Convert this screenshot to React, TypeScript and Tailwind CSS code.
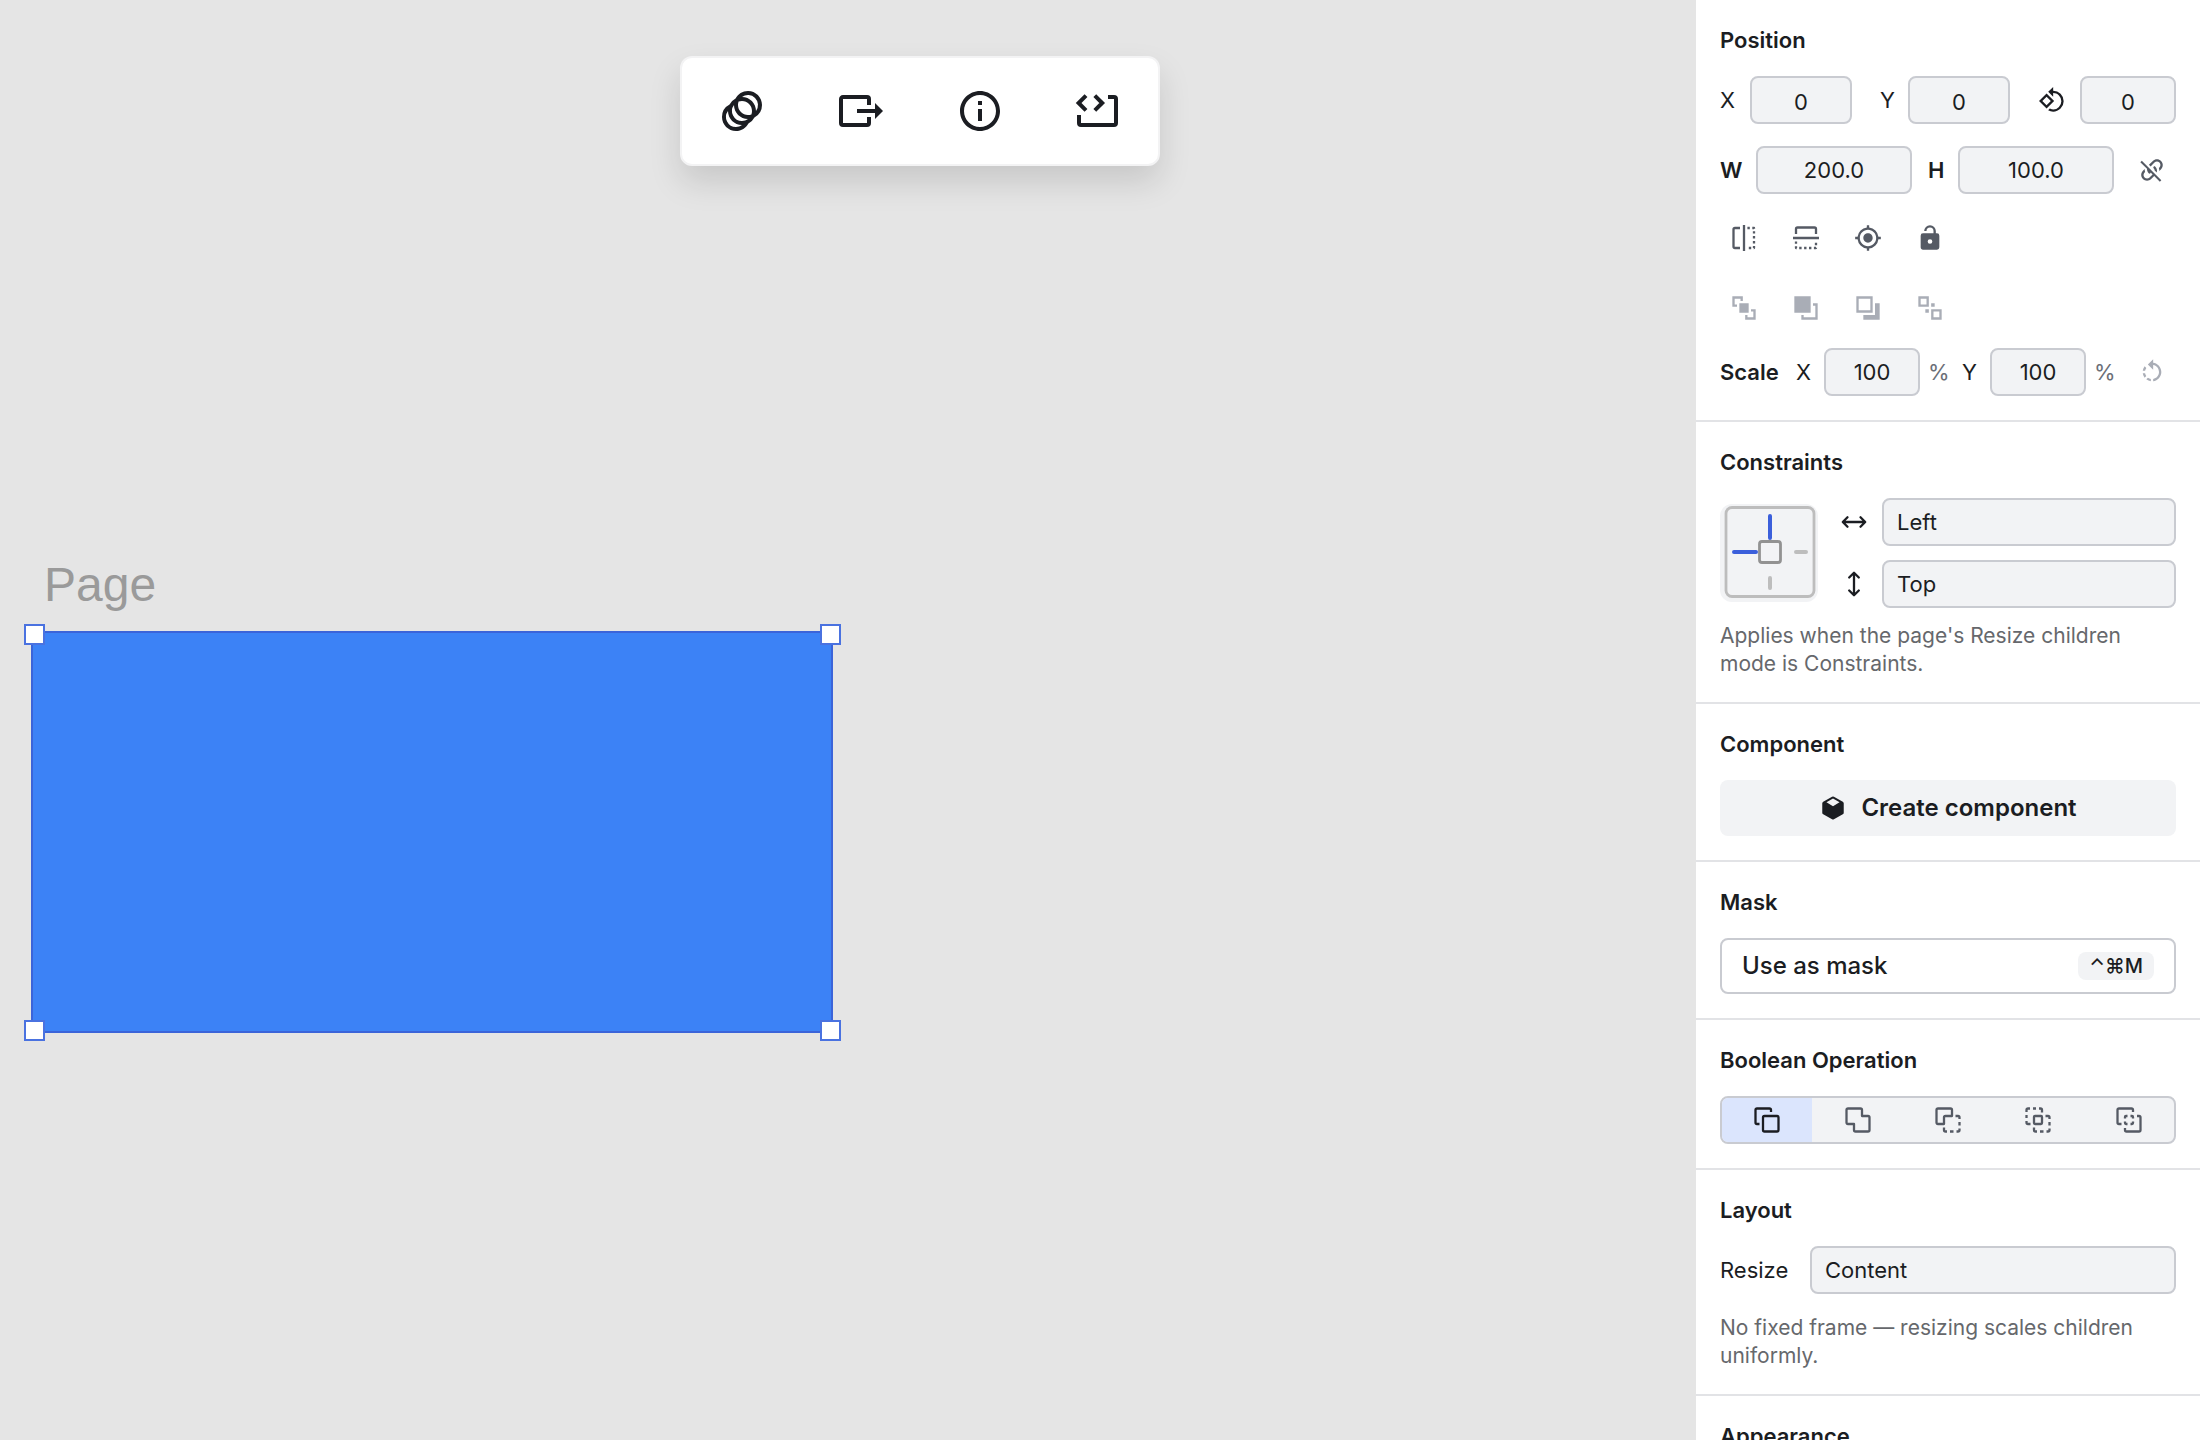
import { useState } from "react"
import type { ReactNode } from "react"
import {
  MdAnimation,
  MdMyLocation,
  MdOutlineInfo,
  MdRotate90DegreesCcw,
  MdRotateLeft,
} from "react-icons/md"

const fieldClass =
  "h-12 min-w-0 rounded-lg border-2 border-[#c9cbd1] bg-[#f2f3f5] text-[22px] text-[#1b1d22]"

const handleClass = "absolute size-[21px] border-2 border-[#4a72e0] bg-white"

// filled 24-unit icon
function Glyph({ d, className = "size-7" }: { d: string; className?: string }) {
  return (
    <svg viewBox="0 0 24 24" className={className} fill="currentColor" aria-hidden="true">
      <path fillRule="evenodd" d={d} />
    </svg>
  )
}

// stroked 28-unit icon
function Lines({ children }: { children: ReactNode }) {
  return (
    <svg
      viewBox="0 0 28 28"
      className="size-7"
      fill="none"
      stroke="currentColor"
      strokeWidth={2.3}
      strokeLinejoin="round"
      aria-hidden="true"
    >
      {children}
    </svg>
  )
}

const paths = {
  export:
    "M23,12L19,8V11H10V13H19V16M1,18V6C1,4.89 1.9,4 3,4H15A2,2 0 0,1 17,6V9H15V6H3V18H15V15H17V18A2,2 0 0,1 15,20H3A2,2 0 0,1 1,18Z",
  linkOff:
    "M2,5.27L3.28,4L20,20.72L18.73,22L13.9,17.17L11.29,19.78C9.34,21.73 6.17,21.73 4.22,19.78C2.27,17.83 2.27,14.66 4.22,12.71L5.71,11.22C5.7,12.04 5.83,12.86 6.11,13.65L5.64,14.12C4.46,15.29 4.46,17.19 5.64,18.36C6.81,19.54 8.71,19.54 9.88,18.36L12.5,15.76L10.88,14.15C10.87,14.39 10.77,14.64 10.59,14.83C10.2,15.22 9.56,15.22 9.17,14.83C8.12,13.77 7.63,12.37 7.72,11L2,5.27M12.71,4.22C14.66,2.27 17.83,2.27 19.78,4.22C21.73,6.17 21.73,9.34 19.78,11.29L18.29,12.78C18.3,11.96 18.17,11.14 17.89,10.36L18.36,9.88C19.54,8.71 19.54,6.81 18.36,5.64C17.19,4.46 15.29,4.46 14.12,5.64L10.79,8.97L9.38,7.55L12.71,4.22M13.41,9.17C13.8,8.78 14.44,8.78 14.83,9.17C16.2,10.54 16.61,12.5 16.06,14.23L14.28,12.46C14.23,11.78 13.94,11.11 13.41,10.59C13,10.2 13,9.56 13.41,9.17Z",
  lockOpen:
    "M18,8A2,2 0 0,1 20,10V20A2,2 0 0,1 18,22H6C4.89,22 4,21.1 4,20V10A2,2 0 0,1 6,8H15V6A3,3 0 0,0 12,3A3,3 0 0,0 9,6H7A5,5 0 0,1 12,1A5,5 0 0,1 17,6V8H18M12,17A2,2 0 0,0 14,15A2,2 0 0,0 12,13A2,2 0 0,0 10,15A2,2 0 0,0 12,17Z",
  toFront:
    "M2,2H11V6H9V4H4V9H6V11H2V2M22,13V22H13V18H15V20H20V15H18V13H22M8,8H16V16H8V8Z",
  forward: "M2,2H16V16H2V2M22,8V22H8V18H10V20H20V10H18V8H22Z",
  backward: "M2,2H16V16H2V2M22,8V22H8V18H18V8H22M4,4V14H14V4H4Z",
  toBack:
    "M2,2H11V11H2V2M9,4H4V9H9V4M22,13V22H13V13H22M15,20H20V15H15V20M16,8V11H13V8H16M11,16H8V13H11V16Z",
  cube: "M11.2,2.4Q12,2 12.8,2.4L20.4,6.6Q21.2,7.1 21.2,8V16Q21.2,16.9 20.4,17.4L12.8,21.7Q12,22.1 11.2,21.7L3.6,17.4Q2.8,16.9 2.8,16V8Q2.8,7.1 3.6,6.6ZM12,3.9L6.4,7.1L12,10.4L17.6,7.1Z",
}

const toolbarItems = [
  { label: "Animation", icon: <MdAnimation className="size-12" /> },
  { label: "Export", icon: <Glyph d={paths.export} className="size-12" /> },
  { label: "Info", icon: <MdOutlineInfo className="size-12" /> },
  {
    label: "Embed code",
    icon: (
      <svg viewBox="0 0 24 24" className="size-12" fill="none" stroke="currentColor" strokeWidth={2} aria-hidden="true">
        <path d="M5.5 4.3 1.8 8l3.7 3.7M9.9 4.3 13.6 8l-3.7 3.7" />
        <path d="M16.5 5H19.5Q20.5 5 20.5 6V18Q20.5 19 19.5 19H3Q2 19 2 18V14" />
      </svg>
    ),
  },
]

const transformItems = [
  {
    label: "Flip horizontal",
    icon: (
      <Lines>
        <path d="M10 4H5Q3.5 4 3.5 5.5V22.5Q3.5 24 5 24H10M14 1V27" />
        <path strokeDasharray="2.4 2.5" d="M17.4 4H24V24H17.4" />
      </Lines>
    ),
  },
  {
    label: "Flip vertical",
    icon: (
      <Lines>
        <path d="M4 10V5Q4 3.5 5.5 3.5H22.5Q24 3.5 24 5V10M1 14H27" />
        <path strokeDasharray="2.4 2.5" d="M4 17.4V24H24V17.4" />
      </Lines>
    ),
  },
  { label: "Center", icon: <MdMyLocation className="size-7" /> },
  { label: "Lock", icon: <Glyph d={paths.lockOpen} /> },
]

const orderItems = [
  { label: "Bring to front", icon: <Glyph d={paths.toFront} /> },
  { label: "Bring forward", icon: <Glyph d={paths.forward} /> },
  { label: "Send backward", icon: <Glyph d={paths.backward} /> },
  { label: "Send to back", icon: <Glyph d={paths.toBack} /> },
]

const booleanItems = [
  {
    label: "None",
    icon: (
      <Lines>
        <rect x="10" y="10" width="15.5" height="15.5" rx="1.5" />
        <path d="M18 6V4Q18 2.5 16.5 2.5H4Q2.5 2.5 2.5 4V16.5Q2.5 18 4 18H6.5" />
      </Lines>
    ),
  },
  {
    label: "Union",
    icon: (
      <Lines>
        <path d="M4 2.5H16.5Q18 2.5 18 4V10H24Q25.5 10 25.5 11.5V24Q25.5 25.5 24 25.5H11.5Q10 25.5 10 24V18H4Q2.5 18 2.5 16.5V4Q2.5 2.5 4 2.5Z" />
      </Lines>
    ),
  },
  {
    label: "Subtract",
    icon: (
      <Lines>
        <path d="M4 2.5H16.5Q18 2.5 18 4V10H11.5Q10 10 10 11.5V18H4Q2.5 18 2.5 16.5V4Q2.5 2.5 4 2.5Z" />
        <path d="M21.5 10H24Q25.5 10 25.5 11.5V13M25.5 16V19.5M25.5 22.5V24Q25.5 25.5 24 25.5H22.5M19.5 25.5H16M13 25.5H11.5Q10 25.5 10 24V21.5" />
      </Lines>
    ),
  },
  {
    label: "Intersect",
    icon: (
      <Lines>
        <rect x="10" y="10" width="8" height="8" rx="1" />
        <path d="M6 2.5H4Q2.5 2.5 2.5 4V6M9 2.5H12M15 2.5H16.5Q18 2.5 18 4V6.5M2.5 9V12M2.5 15V16.5Q2.5 18 4 18H6.5" />
        <path d="M21.5 10H24Q25.5 10 25.5 11.5V13M25.5 16V19.5M25.5 22.5V24Q25.5 25.5 24 25.5H22.5M19.5 25.5H16M13 25.5H11.5Q10 25.5 10 24V21.5" />
      </Lines>
    ),
  },
  {
    label: "Exclude",
    icon: (
      <Lines>
        <path d="M18 6V4Q18 2.5 16.5 2.5H4Q2.5 2.5 2.5 4V16.5Q2.5 18 4 18H6.5M22 10H24Q25.5 10 25.5 11.5V24Q25.5 25.5 24 25.5H11.5Q10 25.5 10 24V22" />
        <path d="M10 12.5V11Q10 10 11 10H12.5M15.5 10H17Q18 10 18 11V12.5M18 15.5V17Q18 18 17 18H15.5M12.5 18H11Q10 18 10 17V15.5" />
      </Lines>
    ),
  },
]

function Section({ title, children }: { title: string; children?: ReactNode }) {
  return (
    <section className="border-b-2 border-[#e2e3e6] px-6 py-6">
      <h2 className="mb-5 text-[22px] leading-8 font-semibold">{title}</h2>
      {children}
    </section>
  )
}

function IconRow({ items, className }: { items: { label: string; icon: ReactNode }[]; className: string }) {
  return (
    <div className={`flex gap-3.5 ${className}`}>
      {items.map((item) => (
        <button key={item.label} type="button" aria-label={item.label} className="flex size-12 items-center justify-center">
          {item.icon}
        </button>
      ))}
    </div>
  )
}

function ConstraintPreview() {
  return (
    <svg viewBox="0 0 98 98" className="size-[98px] rounded-xl bg-[#f2f3f5]" fill="none" aria-hidden="true">
      <rect x="6" y="3.5" width="88" height="89" rx="6" stroke="#bdbdbd" strokeWidth="2.8" />
      <g strokeWidth="4" strokeLinecap="round">
        <path d="M50 12V34M14 48H36" stroke="#3b5fdb" />
        <path d="M76 48H86M50 74V84" stroke="#bdbdbd" />
      </g>
      <rect x="39.5" y="37.5" width="21" height="21" rx="2.5" stroke="#929292" strokeWidth="2.8" fill="#f2f3f5" />
    </svg>
  )
}

function PositionSection() {
  return (
    <Section title="Position">
      <div className="flex items-center gap-7">
        <div className="flex items-center">
          <label htmlFor="pos-x" className="w-[30px]">X</label>
          <input id="pos-x" defaultValue="0" className={`${fieldClass} w-[102px] pt-1 text-center`} />
        </div>
        <div className="flex items-center">
          <label htmlFor="pos-y" className="w-7">Y</label>
          <input id="pos-y" defaultValue="0" className={`${fieldClass} w-[102px] pt-1 text-center`} />
        </div>
        <div className="flex flex-1 items-center gap-3.5">
          <label htmlFor="rotation" aria-label="Rotation">
            <MdRotate90DegreesCcw className="size-7" />
          </label>
          <input id="rotation" defaultValue="0" className={`${fieldClass} w-full pt-1 text-center`} />
        </div>
      </div>

      <div className="mt-[22px] flex items-center">
        <label htmlFor="size-w" className="w-9 font-semibold">W</label>
        <input id="size-w" defaultValue="200.0" className={`${fieldClass} mr-4 flex-1 text-center`} />
        <label htmlFor="size-h" className="w-[30px] font-semibold">H</label>
        <input id="size-h" defaultValue="100.0" className={`${fieldClass} flex-1 text-center`} />
        <button type="button" aria-label="Link proportions" className="ml-3.5 flex size-12 items-center justify-center text-[#555a64]">
          <Glyph d={paths.linkOff} />
        </button>
      </div>

      <IconRow items={transformItems} className="mt-5 text-[#555a64]" />
      <IconRow items={orderItems} className="mt-[22px] text-[#a9adb6]" />

      <div className="mt-4 flex items-center">
        <span className="w-[76px] font-semibold">Scale</span>
        <label htmlFor="scale-x" className="w-7">X</label>
        <input id="scale-x" defaultValue="100" className={`${fieldClass} w-24 text-center`} />
        <span className="ml-2 w-[34px] text-[#6b6f78]">%</span>
        <label htmlFor="scale-y" className="w-7">Y</label>
        <input id="scale-y" defaultValue="100" className={`${fieldClass} w-24 text-center`} />
        <span className="ml-2 w-[34px] text-[#6b6f78]">%</span>
        <button type="button" aria-label="Reset scale" className="flex size-12 items-center justify-center text-[#a9adb6]">
          <MdRotateLeft className="size-7" />
        </button>
      </div>
    </Section>
  )
}

function ConstraintsSection() {
  return (
    <Section title="Constraints">
      <div className="flex items-center justify-between">
        <ConstraintPreview />
        <div className="flex w-[336px] flex-col gap-3.5">
          <div className="flex items-center gap-3.5">
            <label htmlFor="constraint-h" aria-label="Horizontal">
              <Lines>
                <path strokeLinecap="round" d="M3 14H25M7.5 9.2 2.8 14l4.7 4.8M20.5 9.2 25.2 14l-4.7 4.8" />
              </Lines>
            </label>
            <select id="constraint-h" className={`${fieldClass} flex-1 appearance-none pl-[13px]`}>
              <option>Left</option>
              <option>Right</option>
            </select>
          </div>
          <div className="flex items-center gap-3.5">
            <label htmlFor="constraint-v" aria-label="Vertical">
              <Lines>
                <path strokeLinecap="round" d="M14 3V25M9.2 7.5 14 2.8l4.8 4.7M9.2 20.5 14 25.2l4.8-4.7" />
              </Lines>
            </label>
            <select id="constraint-v" className={`${fieldClass} flex-1 appearance-none pl-[13px]`}>
              <option>Top</option>
              <option>Bottom</option>
            </select>
          </div>
        </div>
      </div>
      <p className="mt-3.5 text-[21px] leading-7 text-[#66686c]">
        Applies when the page's Resize children mode is Constraints.
      </p>
    </Section>
  )
}

function Inspector() {
  const [operation, setOperation] = useState("None")

  return (
    <aside className="w-[504px] shrink-0 overflow-hidden bg-white">
      <PositionSection />
      <ConstraintsSection />

      <Section title="Component">
        <button type="button" className="flex h-14 w-full items-center justify-center gap-3.5 rounded-lg bg-[#f2f3f5] text-2xl font-semibold">
          <Glyph d={paths.cube} />
          Create component
        </button>
      </Section>

      <Section title="Mask">
        <button type="button" className="flex h-14 w-full items-center justify-between rounded-lg border-2 border-[#c9cbd1] px-5 text-2xl font-medium">
          Use as mask
          <kbd className="rounded-lg bg-[#f2f3f5] px-[11px] font-[Inter,'DejaVu_Sans',sans-serif] text-xl leading-7">⌃⌘M</kbd>
        </button>
      </Section>

      <Section title="Boolean Operation">
        <div className="flex h-12 overflow-hidden rounded-lg border-2 border-[#c9cbd1] bg-[#f2f3f5]">
          {booleanItems.map((item) => (
            <button
              key={item.label}
              type="button"
              aria-label={item.label}
              aria-pressed={operation === item.label}
              onClick={() => setOperation(item.label)}
              className={`flex flex-1 items-center justify-center ${operation === item.label ? "bg-[#dbe5fd]" : "text-[#555a64]"}`}
            >
              {item.icon}
            </button>
          ))}
        </div>
      </Section>

      <Section title="Layout">
        <div className="flex items-center">
          <label htmlFor="resize" className="w-[90px]">Resize</label>
          <select id="resize" className={`${fieldClass} flex-1 appearance-none pl-[13px]`}>
            <option>Content</option>
            <option>Constraints</option>
          </select>
        </div>
        <p className="mt-5 text-[21px] leading-7 text-[#66686c]">
          No fixed frame — resizing scales children uniformly.
        </p>
      </Section>

      <Section title="Appearance" />
    </aside>
  )
}

function Canvas() {
  return (
    <main className="relative flex-1 overflow-hidden bg-[#e5e5e5]">
      {/* Toolbar */}
      <div className="flex justify-center pt-14 pl-36">
        <div className="flex h-[110px] w-[480px] rounded-xl border-2 border-[#f3f3f4] bg-white shadow-[0_16px_32px_rgba(0,0,0,0.13)]">
          {toolbarItems.map((item) => (
            <button key={item.label} type="button" aria-label={item.label} className="flex flex-1 items-center justify-center">
              {item.icon}
            </button>
          ))}
        </div>
      </div>

      {/* Selected page */}
      <div className="absolute top-[631px] left-[31px] h-[402px] w-[802px] border-2 border-[#3b64d9] bg-[#3c82f6]">
        <span className="absolute -top-[76px] left-[11px] font-['Liberation_Sans',sans-serif] text-5xl leading-[56px] text-[#9a9a9a]">Page</span>
        <span className={`${handleClass} -top-[9px] -left-[9px]`} />
        <span className={`${handleClass} -top-[9px] -right-2.5`} />
        <span className={`${handleClass} -bottom-2.5 -left-[9px]`} />
        <span className={`${handleClass} -right-2.5 -bottom-2.5`} />
      </div>
    </main>
  )
}

export default function App() {
  return (
    <div className="flex h-screen overflow-hidden font-[Inter,sans-serif] text-[22px] text-[#1b1d22]">
      <Canvas />
      <Inspector />
    </div>
  )
}
